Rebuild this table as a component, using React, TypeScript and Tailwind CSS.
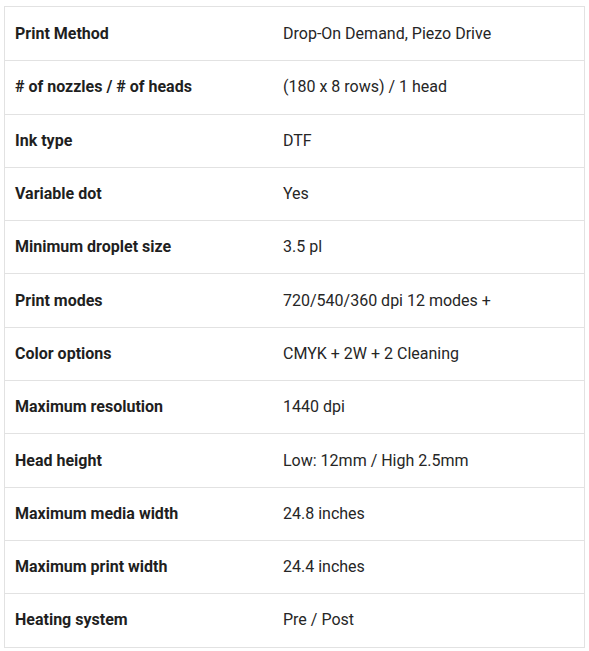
const rows: [string, string][] = [
  ['Print Method', 'Drop-On Demand, Piezo Drive'],
  ['# of nozzles / # of heads', '(180 x 8 rows) / 1 head'],
  ['Ink type', 'DTF'],
  ['Variable dot', 'Yes'],
  ['Minimum droplet size', '3.5 pl'],
  ['Print modes', '720/540/360 dpi 12 modes +'],
  ['Color options', 'CMYK + 2W + 2 Cleaning'],
  ['Maximum resolution', '1440 dpi'],
  ['Head height', 'Low: 12mm / High 2.5mm'],
  ['Maximum media width', '24.8 inches'],
  ['Maximum print width', '24.4 inches'],
  ['Heating system', 'Pre / Post'],
]

export default function App() {
  return (
    <div className="min-h-screen bg-white pt-[6px] pl-[4px] font-['Roboto',sans-serif] text-[16px] text-[#222]">
      <div className="w-[581px] border border-[#e2e2e2]">
        {rows.map(([label, value], i) => (
          <div
            key={label}
            className={`flex items-center h-[53.3px] ${i > 0 ? 'border-t border-[#e2e2e2]' : ''}`}
          >
            <div className="w-[268px] pl-[10px] font-bold text-[#1f1f1f]">{label}</div>
            <div className="pl-[10px] text-[#262626]">{value}</div>
          </div>
        ))}
      </div>
    </div>
  )
}
